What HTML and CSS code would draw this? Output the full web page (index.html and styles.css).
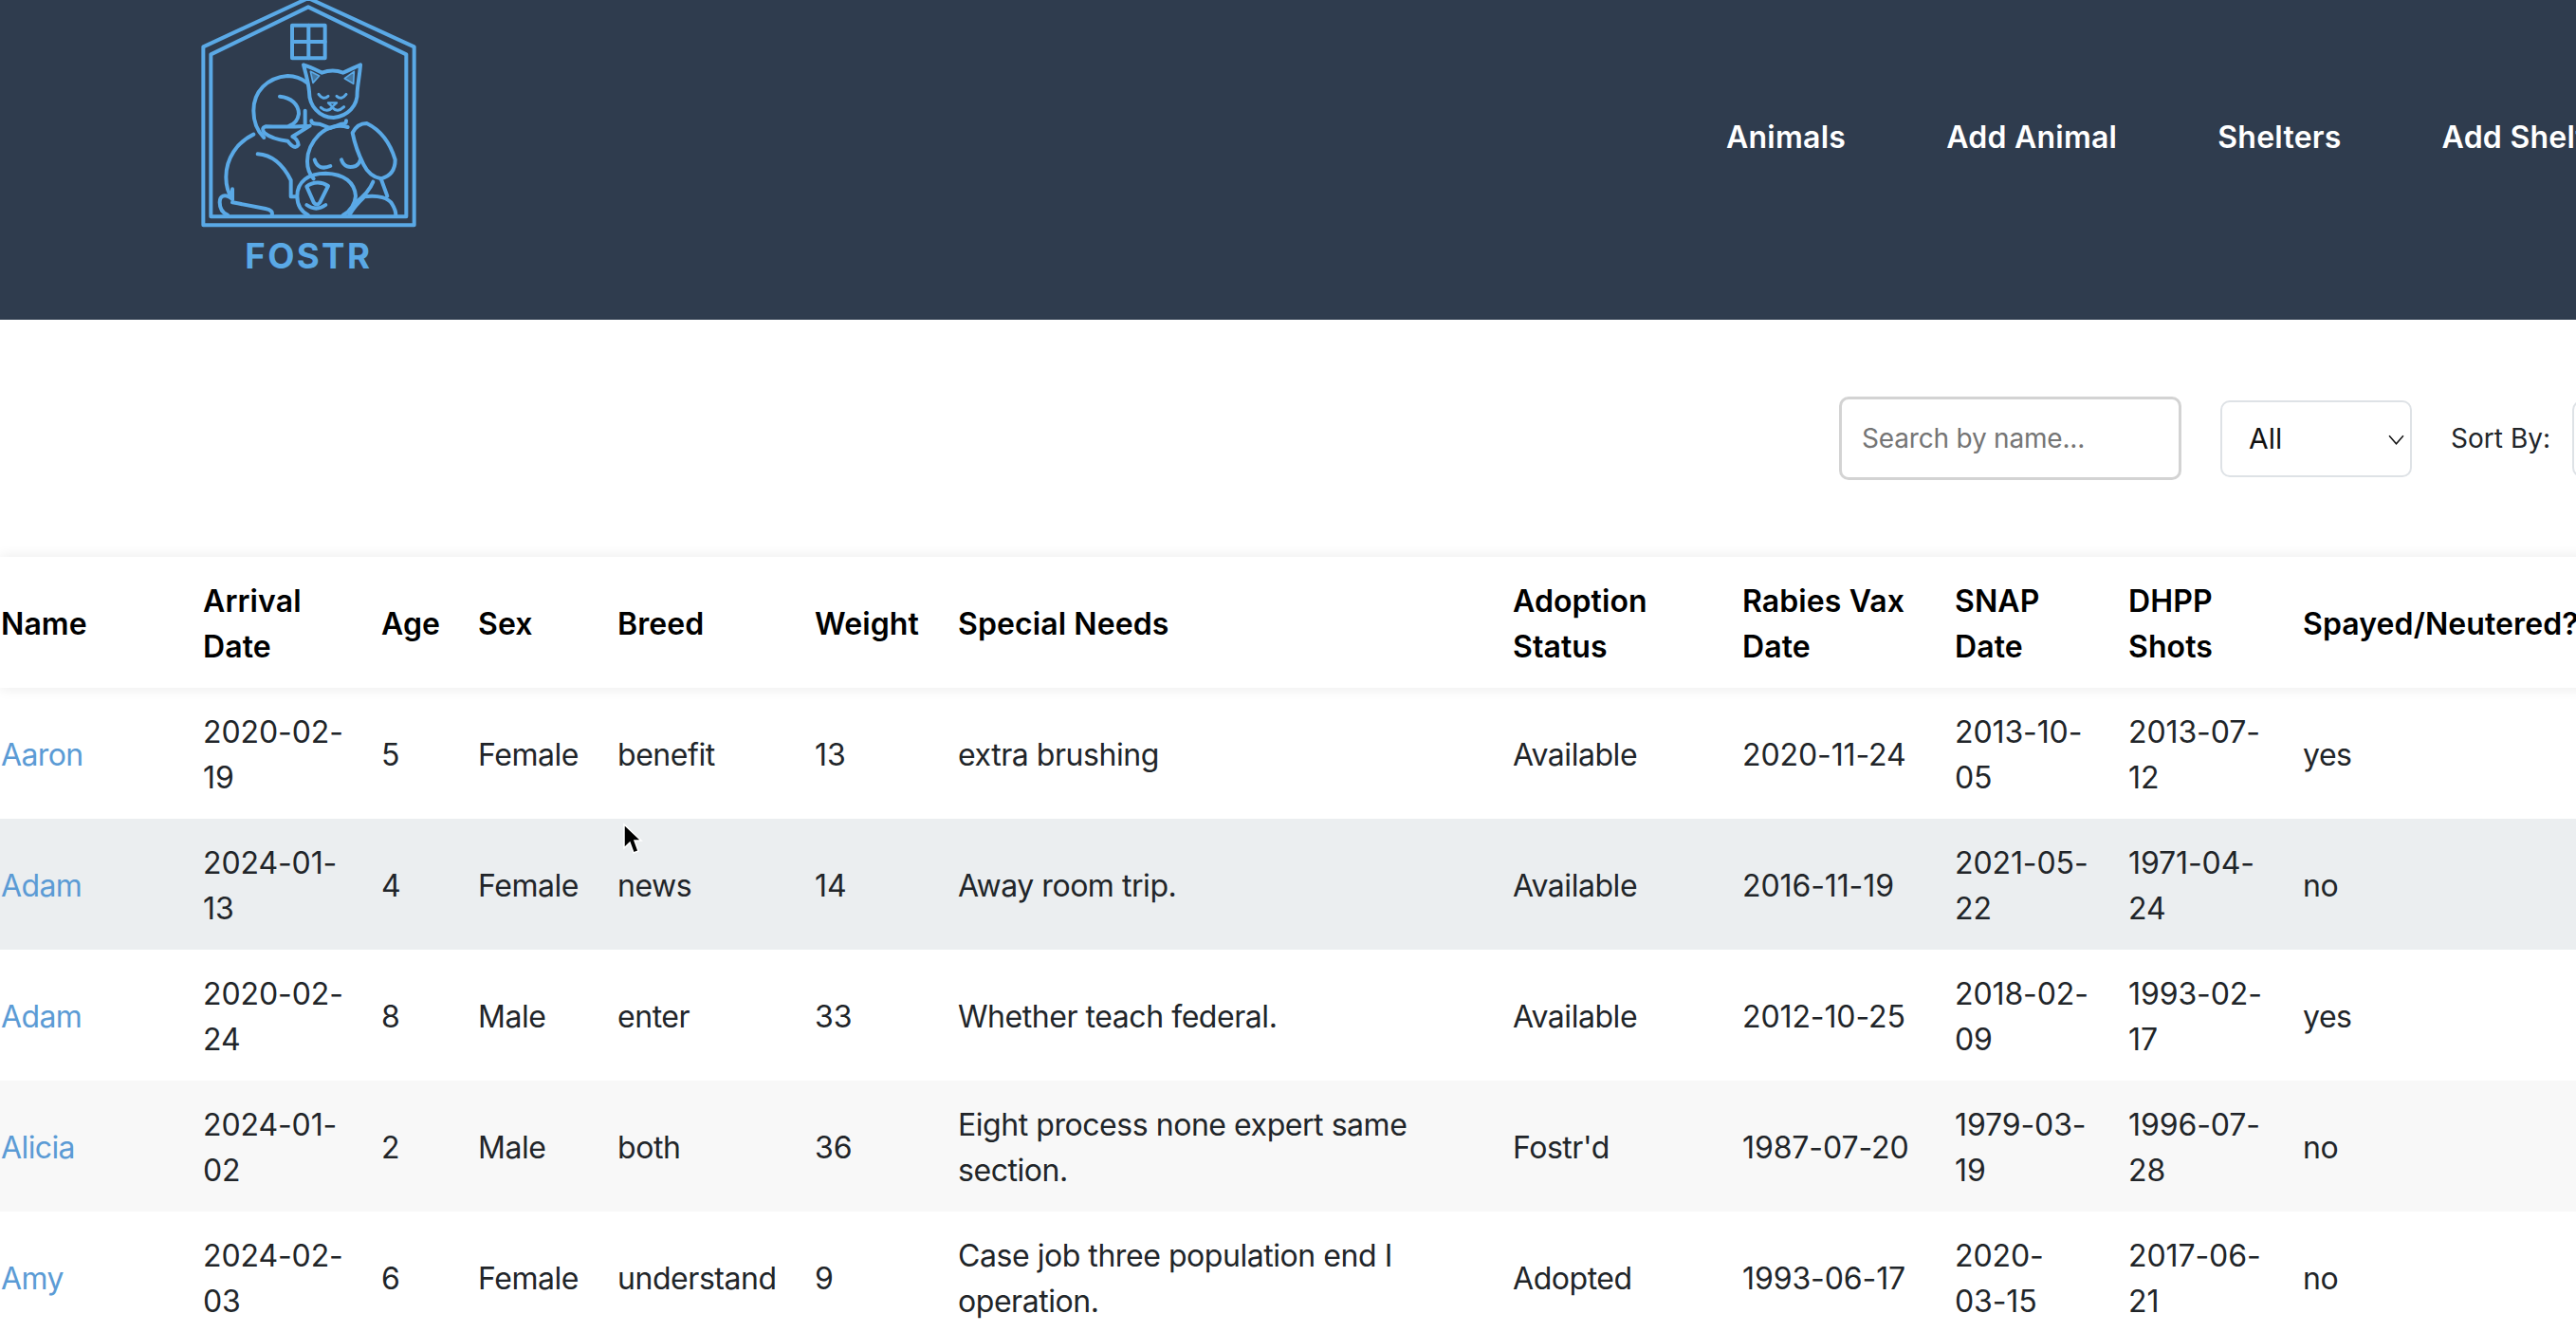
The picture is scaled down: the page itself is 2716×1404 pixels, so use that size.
FILE: index.html
```html
<!DOCTYPE html>
<html lang="en">
<head>
<meta charset="utf-8">
<title>FOSTR</title>
<link rel="stylesheet" href="styles.css">
</head>
<body>
<div class="page">
  <header class="site-header">
    <a class="logo" href="#" aria-label="FOSTR">
      <svg class="logo-svg" viewBox="0 0 900 900" fill="none" stroke="#5aa9e6" stroke-width="12" stroke-linecap="round" stroke-linejoin="round">
        <path d="M103 148 L435 -6 L770 148 V712 H103 Z"/>
        <path d="M127 172 L435 22 L745 172 V685 H127 Z"/>
        <rect x="384" y="80" width="104" height="104"/>
        <path d="M436 80V184M384 132H488"/>
        <path d="M420 205 C445 212 462 222 478 230 C500 222 525 222 545 230 C565 222 582 212 600 205 C598 235 592 262 590 290 C592 335 560 368 515 372 C470 372 438 335 438 290 C436 262 428 235 420 205 Z"/>
        <path d="M442 226 L470 240 L450 262 Z M580 226 L550 248 L578 265 Z" fill="#5aa9e6" fill-opacity=".55" stroke-width="5"/>
        <path d="M468 298 Q482 318 498 304M525 304 Q540 318 555 298" stroke-width="9"/>
        <path d="M498 325 H525 L511 338 Z" stroke-width="7"/>
        <path d="M475 340 Q495 358 511 340 Q527 358 548 338" stroke-width="9"/>
        <path d="M432 262 C410 245 390 240 370 240 C305 245 262 290 262 350 C262 385 275 415 295 435"/>
        <path d="M345 305 C380 308 405 330 405 360 C402 380 392 392 375 398"/>
        <path d="M425 350 V392"/>
        <path d="M445 382 C445 392 458 392 470 392 L505 405 L540 392 C550 392 555 390 555 382"/>
        <path d="M440 398 Q370 402 300 400 Q285 405 296 420 Q320 440 370 446 Q392 476 404 458 Q402 440 385 432 L440 398"/>
        <path d="M262 425 C210 450 175 500 175 560 C175 590 183 612 195 630"/>
        <path d="M195 598 V630 C170 610 155 620 155 640 C155 660 165 674 180 680M195 640 Q250 650 300 660 Q325 665 320 680"/>
        <path d="M275 487 C320 490 355 520 380 570 V622 H398"/>
        <path d="M560 402 C530 392 495 402 470 425 C445 450 432 480 432 510 C432 535 440 552 452 565"/>
        <path d="M575 420 C585 400 600 390 620 390 C665 412 695 455 710 505 C710 540 695 558 665 565 C640 560 622 545 610 520 C592 485 582 455 575 420 Z"/>
        <path d="M455 505 C462 530 482 535 505 525M540 505 C548 528 565 532 585 525 C594 520 598 514 600 505"/>
        <path d="M435 680 C412 668 400 648 400 620 C400 575 435 548 490 548 C550 550 582 578 585 620 C582 648 568 668 545 680"/>
        <path d="M430 590 C450 574 478 574 498 588 L472 640 C465 650 455 648 450 635 Z"/>
        <path d="M430 648 Q460 670 490 648"/>
        <path d="M585 640 C612 620 630 600 640 575M665 565 L685 620M610 622 C660 615 690 628 700 645 C708 658 712 668 712 680M565 680 C578 658 592 642 610 625"/>
        <text class="logo-text" x="436" y="850" text-anchor="middle">FOSTR</text>
      </svg>
    </a>
    <nav class="main-nav">
      <a href="#">Animals</a>
      <a href="#">Add Animal</a>
      <a href="#">Shelters</a>
      <a href="#">Add Shelter</a>
    </nav>
  </header>

  <div class="toolbar">
    <input class="search" type="text" placeholder="Search by name...">
    <div class="select-wrap">
      <select class="select"><option>All</option></select>
      <svg class="chevron" viewBox="0 0 16 10" fill="none" stroke="#111" stroke-width="1.4"><path d="M1 1 L8 9 L15 1"/></svg>
    </div>
    <label class="sort-label">Sort By:</label>
    <div class="select-wrap">
      <select class="select"><option>Name</option></select>
    </div>
  </div>

  <table class="animals">
    <colgroup>
      <col class="c-name"><col class="c-date"><col class="c-age"><col class="c-sex"><col class="c-breed"><col class="c-weight"><col class="c-needs"><col class="c-status"><col class="c-rabies"><col class="c-snap"><col class="c-dhpp"><col class="c-spay">
    </colgroup>
    <thead>
      <tr><th>Name</th><th>Arrival Date</th><th>Age</th><th>Sex</th><th>Breed</th><th>Weight</th><th>Special Needs</th><th>Adoption Status</th><th>Rabies Vax Date</th><th>SNAP Date</th><th>DHPP Shots</th><th>Spayed/Neutered?</th></tr>
    </thead>
    <tbody>
      <tr><td><a href="#">Aaron</a></td><td class="num arrival">2020-02-19</td><td class="num">5</td><td>Female</td><td>benefit</td><td class="num">13</td><td>extra brushing</td><td>Available</td><td class="num">2020-11-24</td><td class="num snap">2013-10-05</td><td class="num">2013-07-12</td><td>yes</td></tr>
      <tr class="hovered"><td><a href="#">Adam</a></td><td class="num arrival">2024-01-13</td><td class="num">4</td><td>Female</td><td>news</td><td class="num">14</td><td>Away room trip.</td><td>Available</td><td class="num">2016-11-19</td><td class="num snap">2021-05-22</td><td class="num">1971-04-24</td><td>no</td></tr>
      <tr><td><a href="#">Adam</a></td><td class="num arrival">2020-02-24</td><td class="num">8</td><td>Male</td><td>enter</td><td class="num">33</td><td>Whether teach federal.</td><td>Available</td><td class="num">2012-10-25</td><td class="num snap">2018-02-09</td><td class="num">1993-02-17</td><td>yes</td></tr>
      <tr class="striped"><td><a href="#">Alicia</a></td><td class="num arrival">2024-01-02</td><td class="num">2</td><td>Male</td><td>both</td><td class="num">36</td><td>Eight process none expert same section.</td><td>Fostr'd</td><td class="num">1987-07-20</td><td class="num snap">1979-03-19</td><td class="num">1996-07-28</td><td>no</td></tr>
      <tr><td><a href="#">Amy</a></td><td class="num arrival">2024-02-03</td><td class="num">6</td><td>Female</td><td>understand</td><td class="num">9</td><td>Case job three population end I operation.</td><td>Adopted</td><td class="num">1993-06-17</td><td class="num snap">2020-03-15</td><td class="num">2017-06-21</td><td>no</td></tr>
    </tbody>
  </table>
</div>
<svg class="cursor" viewBox="0 0 18 32"><path d="M1 1 V26 L7 20 L11 31 L16 29 L12 18 H19 Z" fill="#000" stroke="#fff" stroke-width="1.5"/></svg>
</body>
</html>
```
FILE: styles.css
```css
html, body {
  margin: 0;
  padding: 0;
  height: 1404px;
  overflow: hidden;
  background: #fff;
}
body {
  position: relative;
  font-family: Inter, "Liberation Sans", sans-serif;
  font-size: 32px;
  line-height: 48px;
  color: #212529;
}
.page {
  width: 2950px;
}
.site-header {
  display: flex;
  align-items: flex-start;
  height: 337px;
  background: #2f3c4e;
  overflow: hidden;
}
.logo {
  display: block;
  margin-left: 180px;
  width: 300px;
  height: 300px;
  flex: none;
}
.logo-svg {
  display: block;
  width: 300px;
  height: 300px;
  overflow: visible;
}
.logo-text {
  font-family: Inter, sans-serif;
  font-weight: 700;
  font-size: 110px;
  letter-spacing: 7px;
  fill: #5aa9e6;
  stroke: none;
}
.main-nav {
  display: flex;
  gap: 106px;
  margin-left: 1340px;
  padding-top: 121px;
}
.main-nav a {
  color: #fff;
  font-weight: 600;
  letter-spacing: .25px;
  text-decoration: none;
  white-space: nowrap;
}
.toolbar {
  display: flex;
  align-items: center;
  justify-content: flex-end;
  height: 250px;
  padding-right: 36px;
  gap: 41px;
}
.search {
  box-sizing: border-box;
  width: 361px;
  height: 88px;
  padding: 0 21px;
  border: 3px solid #d3d3d3;
  border-radius: 10px;
  font: 400 28px Inter, sans-serif;
  letter-spacing: -.2px;
  color: #212529;
  outline: none;
}
.search::placeholder {
  color: #757575;
  opacity: 1;
}
.select-wrap {
  position: relative;
  display: block;
  height: 81px;
}
.select {
  box-sizing: border-box;
  appearance: none;
  display: block;
  width: 202px;
  height: 81px;
  padding: 0 28px;
  border: 2px solid #dee2e6;
  border-radius: 10px;
  background: #fff;
  font: 400 30px Inter, sans-serif;
  color: #111;
}
.chevron {
  position: absolute;
  right: 8px;
  top: 36px;
  width: 17px;
  height: 11px;
}
.sort-label {
  margin-right: -18px;
  font-size: 28px;
  color: #212529;
}
.animals {
  table-layout: fixed;
  width: 2737px;
  border-collapse: collapse;
}
.c-name { width: 193px; }
.c-date { width: 188px; }
.c-age { width: 102px; }
.c-sex { width: 147px; }
.c-breed { width: 208px; }
.c-weight { width: 151px; }
.c-needs { width: 585px; }
.c-status { width: 242px; }
.c-rabies { width: 224px; }
.c-snap { width: 183px; }
.c-dhpp { width: 184px; }
.c-spay { width: 330px; }
.animals thead tr {
  box-shadow: 0 0 14px rgba(0, 0, 0, .09);
}
.animals th,
.animals td {
  padding: 23px 21px 19px;
  vertical-align: middle;
  text-align: left;
}
.animals td {
  letter-spacing: -.45px;
}
.animals td.num {
  letter-spacing: -.1px;
}
.animals td.arrival {
  padding-right: 12px;
}
.animals td.snap {
  padding-right: 17px;
}
.animals th {
  font-weight: 600;
  letter-spacing: .1px;
  color: #000;
}
.animals th:first-child,
.animals td:first-child {
  padding-left: 1px;
}
.animals a {
  color: #5b9bd5;
  letter-spacing: -.6px;
  text-decoration: none;
}
.hovered { background: #ebeef0; }
.striped { background: #f8f8f8; }
.cursor {
  position: absolute;
  left: 657px;
  top: 868px;
  width: 18px;
  height: 32px;
  overflow: visible;
}
```
